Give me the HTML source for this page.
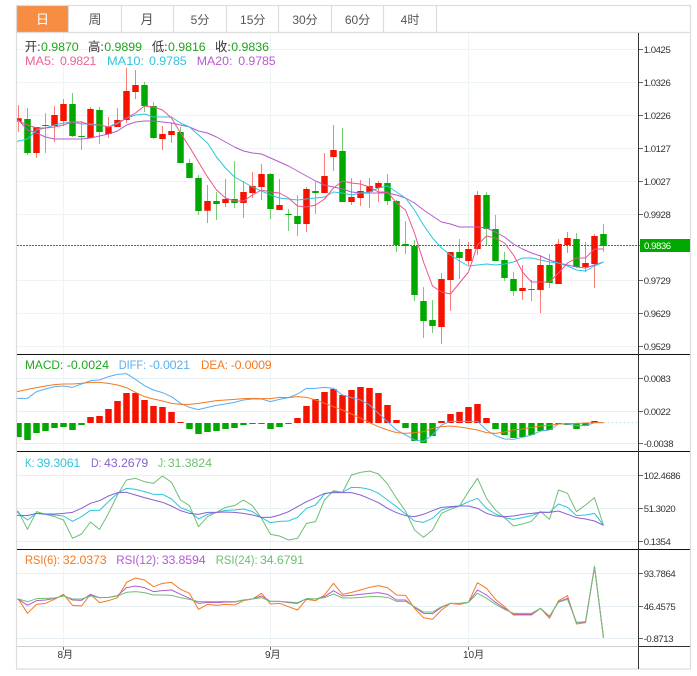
<!DOCTYPE html>
<html><head><meta charset="utf-8"><style>
html,body{margin:0;padding:0;background:#fff;width:697px;height:676px;overflow:hidden}
svg{display:block;position:absolute;left:0;top:0}
text{font-family:"Liberation Sans","Noto Sans CJK SC",sans-serif}
.l polyline{fill:none;stroke-width:1;vector-effect:non-scaling-stroke;stroke-linejoin:round}
.a text{font-size:9.6px;fill:#333;letter-spacing:-.45px}
.t text{font-size:12px;fill:#555;text-anchor:middle}
.g{font-size:12.4px}
</style></head><body>
<svg width="697" height="676" viewBox="0 0 697 676" xmlns="http://www.w3.org/2000/svg">
<defs><clipPath id="c"><rect x="17" y="33" width="621" height="613"/></clipPath></defs>
<rect x="17" y="6" width="51.5" height="26" fill="#f68d42"/>
<g fill="none" stroke="#dcdcdc" stroke-width="1.2">
<rect x="16.5" y="5.5" width="674" height="663.5"/>
<path d="M17 32.5H690M68.5 6V32M121.5 6V32M173.5 6V32M226.5 6V32M278.5 6V32M331.5 6V32M383.5 6V32M436.5 6V32"/>
</g>
<g class="t">
<text x="42.5" y="24" fill="#fff" style="fill:#fff;font-size:13px">日</text>
<text x="95" y="24" style="font-size:13px">周</text>
<text x="147" y="24" style="font-size:13px">月</text>
<text x="200" y="24">5分</text>
<text x="252.7" y="24">15分</text>
<text x="305" y="24">30分</text>
<text x="357.5" y="24">60分</text>
<text x="410" y="24">4时</text>
</g>
<g fill="none" stroke="#eef3f5" stroke-width="1">
<path d="M17 49.5H638M17 82.5H638M17 115.5H638M17 148.5H638M17 181.5H638M17 214.5H638M17 280.5H638M17 313.5H638M17 346.5H638"/>
<path d="M63.5 33V646M270.5 33V646M468.5 33V646"/>
<path stroke="#e6eff3" d="M17 378.5H638M17 411.5H638M17 443.5H638M17 475.5H638M17 508.5H638M17 541.5H638M17 573.5H638M17 606.5H638M17 638.5H638"/>
</g>
<path d="M17 245.5H690" stroke="#00a800" stroke-width="1" stroke-dasharray="2 1" fill="none"/>
<g clip-path="url(#c)">
<path fill="none" stroke="#f5130a" stroke-opacity=".55" d="M18.5 105V132M36.5 127V158M54.5 106V142M63.5 99V126M90.5 107V138M108.5 117V138M117.5 108V127M126.5 68V123M135.5 70V99M162.5 126V150M171.5 123V143M207.5 185V223M225.5 179V207M243.5 181V218M252.5 172V198M261.5 164V200M279.5 179V210M306.5 187V232M324.5 153V193M333.5 125V171M351.5 178V205M360.5 180V206M369.5 178V208M378.5 181V202M441.5 273V344M450.5 252V311M468.5 242V265M477.5 191V255M522.5 265V300M540.5 255V313M558.5 239V284M567.5 232V253M585.5 242V272M594.5 234V288"/>
<path fill="none" stroke="#00a800" stroke-opacity=".55" d="M27.5 108V155M45.5 113V153M72.5 93V137M81.5 121V150M99.5 107V144M144.5 82V112M153.5 102V139M180.5 127V163M189.5 159V178M198.5 175V215M216.5 192V220M234.5 161V208M270.5 173V219M288.5 209V231M297.5 195V236M315.5 182V214M342.5 128V202M387.5 174V205M396.5 200V252M405.5 221V254M414.5 240V301M423.5 287V338M432.5 300V333M459.5 239V279M486.5 192V245M495.5 215V261M504.5 252V281M513.5 272V296M531.5 280V301M549.5 254V288M576.5 233V268M603.5 224V252"/>
<path fill="none" stroke="#f51300" stroke-width="6.5" d="M18.5 118.3V121.5M36.5 127V153M54.5 115V126M63.5 104V121M90.5 109V138M108.5 127V134M117.5 120V127M126.5 91V120M135.5 85V92M162.5 134V139M171.5 131V135M207.5 201V210.7M225.5 199V203M243.5 192V203M252.5 186V193M261.5 174V187M279.5 205V210M306.5 189V224M324.5 176V193M333.5 150V157M351.5 197V202M360.5 191V198M369.5 186V192M378.5 183V188M441.5 279V327M450.5 252V280M468.5 249V261M477.5 195V249M522.5 288V291M540.5 265V290M558.5 244V284M567.5 238V245M585.5 263V267M594.5 236V264"/>
<path fill="none" stroke="#00a800" stroke-width="6.5" d="M27.5 119V153M45.5 125V126M72.5 104V136M81.5 136V137M99.5 110V132M144.5 85V106M153.5 106V138M180.5 132V163M189.5 163V178M198.5 178V211M216.5 201V204M234.5 199V203M270.5 174V209M288.5 214V215M297.5 216V224M315.5 191V193M342.5 151V202M387.5 183V201M396.5 201V245M405.5 244V246M414.5 246V295M423.5 301V321M432.5 320V326M459.5 252V258M486.5 195V229M495.5 229V261M504.5 260V278M513.5 279V291M531.5 289V290M549.5 265V283M576.5 239V267M603.5 234V246"/>
<g class="l">
<polyline stroke="#b45ad0" points="17,120 18.5,120 27.5,130 36.5,133 45.5,137 54.5,139 63.5,139 72.5,139 81.5,139 90.5,138 99.5,136 108.5,134 117.5,131 126.5,125 135.5,122 144.5,121 153.5,121 162.5,122 171.5,123 180.5,125 189.5,127 198.5,131 207.5,133 216.5,137 225.5,142 234.5,147 243.5,151 252.5,153 261.5,154 270.5,158 279.5,162 288.5,166 297.5,171 306.5,176 315.5,181 324.5,185 333.5,187 342.5,189 351.5,192 360.5,193 369.5,193 378.5,193 387.5,193 396.5,195 405.5,198 414.5,203 423.5,210 432.5,216 441.5,222 450.5,224 459.5,227 468.5,227 477.5,227 486.5,228 495.5,232 504.5,237 513.5,244 522.5,249 531.5,253 540.5,256 549.5,260 558.5,263 567.5,265 576.5,267 585.5,268 594.5,265 603.5,262"/>
<polyline stroke="#2dc5dc" points="17,142 18.5,141 27.5,139 36.5,130 45.5,128 54.5,125 63.5,123 72.5,122 81.5,124 90.5,124 99.5,125 108.5,127 117.5,123 126.5,118 135.5,115 144.5,114 153.5,117 162.5,117 171.5,117 180.5,123 189.5,127 198.5,135 207.5,143 216.5,157 225.5,168 234.5,177 243.5,182 252.5,187 261.5,191 270.5,195 279.5,198 288.5,199 297.5,200 306.5,199 315.5,198 324.5,197 333.5,192 342.5,193 351.5,195 360.5,193 369.5,192 378.5,188 387.5,186 396.5,192 405.5,198 414.5,210 423.5,225 432.5,238 441.5,248 450.5,255 459.5,261 468.5,266 477.5,265 486.5,264 495.5,265 504.5,264 513.5,262 522.5,258 531.5,258 540.5,260 549.5,262 558.5,263 567.5,266 576.5,270 585.5,271 594.5,266 603.5,262"/>
<polyline stroke="#f0528c" points="17,120 18.5,121 27.5,125 36.5,128 45.5,128 54.5,127 63.5,125 72.5,122 81.5,122 90.5,125 99.5,125 108.5,127 117.5,124 126.5,118 135.5,113 144.5,106 153.5,107 162.5,110 171.5,118 180.5,133 189.5,147 198.5,162 207.5,177 216.5,190 225.5,198 234.5,201 243.5,201 252.5,195 261.5,190 270.5,192 279.5,193 288.5,198 297.5,206 306.5,207 315.5,205 324.5,199 333.5,188 342.5,181 351.5,183 360.5,184 369.5,187 378.5,192 387.5,192 396.5,203 405.5,210 414.5,233 423.5,262 432.5,286 441.5,292 450.5,294 459.5,283 468.5,272 477.5,245 486.5,236 495.5,238 504.5,243 513.5,255 522.5,272 531.5,282 540.5,282 549.5,282 558.5,273 567.5,263 576.5,258 585.5,258 594.5,249 603.5,249"/>
</g>
<path fill="none" stroke="#f51300" stroke-width="6.5" d="M90.5 423V417M99.5 423V416M108.5 423V409M117.5 423V401M126.5 423V393M135.5 423V393M144.5 423V400M153.5 423V406M162.5 423V407M171.5 423V412M180.5 423V422M297.5 423V418M306.5 423V406M315.5 423V399M324.5 423V392M333.5 423V389M342.5 423V395M351.5 423V390M360.5 423V387M369.5 423V388M378.5 423V393M387.5 423V405M396.5 423V420M441.5 423V421M450.5 423V414M459.5 423V412M468.5 423V407M477.5 423V404M486.5 423V418M594.5 423V421"/>
<path fill="none" stroke="#00a800" stroke-width="6.5" d="M18.5 423V437M27.5 423V440M36.5 423V433M45.5 423V431M54.5 423V428M63.5 423V427M72.5 423V430M81.5 423V425M189.5 423V429M198.5 423V434M207.5 423V432M216.5 423V431M225.5 423V429M234.5 423V428M243.5 423V425M252.5 423V424M261.5 423V424M270.5 423V429M279.5 423V427M288.5 423V424M405.5 423V428M414.5 423V441M423.5 423V443M432.5 423V436M495.5 423V429M504.5 423V435M513.5 423V438M522.5 423V437M531.5 423V435M540.5 423V431M549.5 423V430M558.5 423V424M567.5 423V425M576.5 423V429M585.5 423V426"/>
<path d="M603.5 422.7H638" stroke="#bfe3f3" stroke-dasharray="2 2" fill="none"/>
<g class="l" transform="translate(0,350) scale(1,.33333)">
<polyline stroke="#5aaef0" points="17,145 18.5,145 27.5,145 36.5,125 45.5,117 54.5,110 63.5,108 72.5,112 81.5,102 90.5,92 99.5,90 108.5,80 117.5,73 126.5,71 135.5,88 144.5,107 153.5,120 162.5,128 171.5,140 180.5,160 189.5,172 198.5,179 207.5,172 216.5,166 225.5,162 234.5,157 243.5,150 252.5,147 261.5,147 270.5,155 279.5,148 288.5,143 297.5,132 306.5,115 315.5,115 324.5,112 333.5,115 342.5,135 351.5,143 360.5,150 369.5,165 378.5,190 387.5,215 396.5,240 405.5,255 414.5,270 423.5,274 432.5,255 441.5,225 450.5,214 459.5,214 468.5,214 477.5,214 486.5,240 495.5,257 504.5,267 513.5,268 522.5,262 531.5,255 540.5,243 549.5,240 558.5,222 567.5,222 576.5,227 585.5,227 594.5,218 603.5,218"/>
<polyline stroke="#f47a20" points="17,124 18.5,124 27.5,118 36.5,113 45.5,108 54.5,104 63.5,102 72.5,102 81.5,100 90.5,97 99.5,97 108.5,100 117.5,105 126.5,113 135.5,127 144.5,140 153.5,147 162.5,153 171.5,160 180.5,163 189.5,163 198.5,160 207.5,156 216.5,152 225.5,150 234.5,148 243.5,146 252.5,145 261.5,146 270.5,146 279.5,142 288.5,143 297.5,140 306.5,142 315.5,150 324.5,160 333.5,170 342.5,180 351.5,192 360.5,205 369.5,218 378.5,230 387.5,240 396.5,248 405.5,250 414.5,248 423.5,245 432.5,235 441.5,230 450.5,228 459.5,231 468.5,235 477.5,240 486.5,248 495.5,250 504.5,246 513.5,240 522.5,237 531.5,232 540.5,228 549.5,226 558.5,222 567.5,221 576.5,220 585.5,219 594.5,218 603.5,218"/>
</g>
<g class="l" transform="translate(0,450) scale(1,.33333)">
<polyline stroke="#6fbf73" points="17,183 18.5,185 27.5,238 36.5,185 45.5,193 54.5,200 63.5,210 72.5,265 81.5,252 90.5,216 99.5,238 108.5,190 117.5,135 126.5,90 135.5,85 144.5,95 153.5,100 162.5,78 171.5,97 180.5,150 189.5,167 198.5,230 207.5,200 216.5,187 225.5,172 234.5,167 243.5,150 252.5,167 261.5,205 270.5,253 279.5,258 288.5,270 297.5,265 306.5,220 315.5,215 324.5,150 333.5,122 342.5,127 351.5,75 360.5,67 369.5,63 378.5,72 387.5,102 396.5,145 405.5,183 414.5,240 423.5,262 432.5,240 441.5,190 450.5,178 459.5,168 468.5,125 477.5,85 486.5,145 495.5,180 504.5,203 513.5,228 522.5,222 531.5,214 540.5,184 549.5,208 558.5,120 567.5,130 576.5,185 585.5,165 594.5,143 603.5,226"/>
<polyline stroke="#2dc5dc" points="17,185 18.5,190 27.5,210 36.5,190 45.5,193 54.5,195 63.5,198 72.5,214 81.5,200 90.5,181 99.5,181 108.5,155 117.5,130 126.5,115 135.5,118 144.5,125 153.5,133 162.5,133 171.5,147 180.5,173 189.5,183 198.5,207 207.5,193 216.5,187 225.5,181 234.5,180 243.5,177 252.5,185 261.5,203 270.5,218 279.5,214 288.5,213 297.5,202 306.5,175 315.5,165 324.5,132 333.5,125 342.5,127 351.5,112 360.5,113 369.5,118 378.5,130 387.5,150 396.5,170 405.5,192 414.5,213 423.5,217 432.5,205 441.5,180 450.5,172 459.5,168 468.5,155 477.5,145 486.5,175 495.5,192 504.5,203 513.5,208 522.5,203 531.5,197 540.5,186 549.5,187 558.5,162 567.5,172 576.5,197 585.5,195 594.5,190 603.5,226"/>
<polyline stroke="#8a5fd0" points="17,196 18.5,196 27.5,197 36.5,190 45.5,192 54.5,192 63.5,190 72.5,187 81.5,175 90.5,160 99.5,152 108.5,138 117.5,128 126.5,127 135.5,135 144.5,143 153.5,150 162.5,157 171.5,168 180.5,182 189.5,190 198.5,193 207.5,187 216.5,187 225.5,186 234.5,187 243.5,190 252.5,195 261.5,202 270.5,202 279.5,195 288.5,185 297.5,170 306.5,155 315.5,143 324.5,130 333.5,128 342.5,128 351.5,128 360.5,135 369.5,146 378.5,158 387.5,175 396.5,188 405.5,197 414.5,200 423.5,193 432.5,182 441.5,172 450.5,170 459.5,168 468.5,168 477.5,175 486.5,190 495.5,198 504.5,200 513.5,198 522.5,193 531.5,190 540.5,187 549.5,187 558.5,183 567.5,193 576.5,203 585.5,207 594.5,213 603.5,226"/>
</g>
<g class="l" transform="translate(0,550) scale(1,.33333)">
<polyline stroke="#f47a20" points="17,147 18.5,148 27.5,190 36.5,163 45.5,160 54.5,148 63.5,133 72.5,166 81.5,168 90.5,133 99.5,158 108.5,152 117.5,143 126.5,97 135.5,84 144.5,90 153.5,110 162.5,100 171.5,97 180.5,118 189.5,130 198.5,178 207.5,163 216.5,166 225.5,163 234.5,165 243.5,152 252.5,147 261.5,130 270.5,162 279.5,160 288.5,170 297.5,180 306.5,148 315.5,152 324.5,135 333.5,100 342.5,133 351.5,127 360.5,120 369.5,112 378.5,107 387.5,113 396.5,135 405.5,136 414.5,175 423.5,203 432.5,208 441.5,180 450.5,160 459.5,163 468.5,157 477.5,98 486.5,115 495.5,148 504.5,170 513.5,195 522.5,195 531.5,195 540.5,175 549.5,205 558.5,152 567.5,137 576.5,222 585.5,218 594.5,50 603.5,263"/>
<polyline stroke="#b45ad0" points="17,147 18.5,148 27.5,166 36.5,152 45.5,150 54.5,145 63.5,137 72.5,150 81.5,151 90.5,133 99.5,143 108.5,142 117.5,137 126.5,113 135.5,108 144.5,113 153.5,125 162.5,122 171.5,120 180.5,133 189.5,145 198.5,160 207.5,157 216.5,158 225.5,156 234.5,156 243.5,150 252.5,147 261.5,138 270.5,154 279.5,154 288.5,158 297.5,160 306.5,146 315.5,147 324.5,140 333.5,122 342.5,138 351.5,136 360.5,133 369.5,130 378.5,128 387.5,133 396.5,150 405.5,150 414.5,172 423.5,190 432.5,191 441.5,172 450.5,160 459.5,161 468.5,157 477.5,120 486.5,135 495.5,157 504.5,175 513.5,192 522.5,193 531.5,193 540.5,175 549.5,200 558.5,155 567.5,145 576.5,218 585.5,216 594.5,50 603.5,263"/>
<polyline stroke="#6fbf73" points="17,147 18.5,147 27.5,155 36.5,146 45.5,145 54.5,144 63.5,138 72.5,147 81.5,147 90.5,138 99.5,143 108.5,142 117.5,138 126.5,127 135.5,125 144.5,128 153.5,135 162.5,135 171.5,136 180.5,143 189.5,148 198.5,155 207.5,155 216.5,155 225.5,154 234.5,155 243.5,150 252.5,147 261.5,143 270.5,154 279.5,154 288.5,156 297.5,158 306.5,146 315.5,147 324.5,143 333.5,132 342.5,144 351.5,144 360.5,142 369.5,140 378.5,140 387.5,142 396.5,154 405.5,154 414.5,170 423.5,186 432.5,186 441.5,170 450.5,160 459.5,160 468.5,157 477.5,130 486.5,145 495.5,163 504.5,178 513.5,190 522.5,190 531.5,190 540.5,175 549.5,198 558.5,157 567.5,148 576.5,217 585.5,215 594.5,50 603.5,263"/>
</g>
</g>
<g fill="none" stroke="#111" stroke-width="1">
<path d="M17 354.5H690M17 451.5H690M17 549.5H690"/>
</g>
<path d="M17 646.5H638" stroke="#cfcfcf" fill="none"/>
<path d="M638 646.5H690" stroke="#333" fill="none"/>
<path d="M638.5 33V669" stroke="#333" fill="none"/>
<path d="M639 49.5h4M639 82.5h4M639 115.5h4M639 148.5h4M639 181.5h4M639 214.5h4M639 280.5h4M639 313.5h4M639 346.5h4M639 378.5h4M639 411.5h4M639 443.5h4M639 475.5h4M639 508.5h4M639 541.5h4M639 573.5h4M639 606.5h4M639 638.5h4M63.5 647v3M270.5 647v3M468.5 647v3" stroke="#666" fill="none"/>
<rect x="640" y="239" width="50" height="13" fill="#00a800"/>
<g class="a">
<text x="643.7" y="53">1.0425</text>
<text x="643.7" y="86">1.0326</text>
<text x="643.7" y="119">1.0226</text>
<text x="643.7" y="152">1.0127</text>
<text x="643.7" y="185">1.0027</text>
<text x="643.7" y="218">0.9928</text>
<text x="644" y="249" style="fill:#fff">0.9836</text>
<text x="643.7" y="284">0.9729</text>
<text x="643.7" y="317">0.9629</text>
<text x="643.7" y="350">0.9529</text>
<text x="643.7" y="382">0.0083</text>
<text x="643.7" y="415">0.0022</text>
<text x="643.7" y="447">-0.0038</text>
<text x="643.7" y="479">102.4686</text>
<text x="643.7" y="512">51.3020</text>
<text x="643.7" y="545">0.1354</text>
<text x="643.7" y="577">93.7864</text>
<text x="643.7" y="610">46.4575</text>
<text x="643.7" y="642">-0.8713</text>
<text x="57.5" y="658" style="font-size:10px;letter-spacing:0">8月</text>
<text x="265" y="658" style="font-size:10px;letter-spacing:0">9月</text>
<text x="463" y="658" style="font-size:10px;letter-spacing:0">10月</text>
</g>
<g class="g">
<text x="24.7" y="51" fill="#333">开:</text><text x="41" y="51" fill="#1fa51f" textLength="37.7">0.9870</text>
<text x="88" y="51" fill="#333">高:</text><text x="104.3" y="51" fill="#1fa51f" textLength="37.7">0.9899</text>
<text x="151.7" y="51" fill="#333">低:</text><text x="168" y="51" fill="#1fa51f" textLength="37.7">0.9816</text>
<text x="215" y="51" fill="#333">收:</text><text x="231.3" y="51" fill="#1fa51f" textLength="37.7">0.9836</text>
<text x="25" y="65" fill="#f0609a" textLength="29.5" lengthAdjust="spacingAndGlyphs">MA5:</text><text x="60" y="65" fill="#f0609a" textLength="36.3">0.9821</text>
<text x="107" y="65" fill="#2dc5dc" textLength="37" lengthAdjust="spacingAndGlyphs">MA10:</text><text x="149" y="65" fill="#2dc5dc" textLength="37.7">0.9785</text>
<text x="196.7" y="65" fill="#b45ad0" textLength="35.7" lengthAdjust="spacingAndGlyphs">MA20:</text><text x="238.3" y="65" fill="#b45ad0" textLength="37.4">0.9785</text>
<text x="25" y="369" fill="#1fa51f" textLength="38.3" lengthAdjust="spacingAndGlyphs">MACD:</text><text x="66.7" y="369" fill="#1fa51f" textLength="42.3">-0.0024</text>
<text x="118.7" y="369" fill="#5aaef0" textLength="27.5" lengthAdjust="spacingAndGlyphs">DIFF:</text><text x="149" y="369" fill="#5aaef0" textLength="41">-0.0021</text>
<text x="201" y="369" fill="#f47a20" textLength="27" lengthAdjust="spacingAndGlyphs">DEA:</text><text x="230.7" y="369" fill="#f47a20" textLength="41">-0.0009</text>
<text x="25" y="467" fill="#2dc5dc" textLength="9.5" lengthAdjust="spacingAndGlyphs">K:</text><text x="36.7" y="467" fill="#2dc5dc" textLength="43.6">39.3061</text>
<text x="91" y="467" fill="#8a5fd0" textLength="10.5" lengthAdjust="spacingAndGlyphs">D:</text><text x="104" y="467" fill="#8a5fd0" textLength="44.3">43.2679</text>
<text x="158" y="467" fill="#6fbf73" textLength="8" lengthAdjust="spacingAndGlyphs">J:</text><text x="167.7" y="467" fill="#6fbf73" textLength="44.3">31.3824</text>
<text x="25" y="564" fill="#f47a20" textLength="35" lengthAdjust="spacingAndGlyphs">RSI(6):</text><text x="62.7" y="564" fill="#f47a20" textLength="44">32.0373</text>
<text x="116.3" y="564" fill="#b45ad0" textLength="43" lengthAdjust="spacingAndGlyphs">RSI(12):</text><text x="161.7" y="564" fill="#b45ad0" textLength="44">33.8594</text>
<text x="215.7" y="564" fill="#6fbf73" textLength="42" lengthAdjust="spacingAndGlyphs">RSI(24):</text><text x="260" y="564" fill="#6fbf73" textLength="44">34.6791</text>
</g>
</svg>
</body></html>
